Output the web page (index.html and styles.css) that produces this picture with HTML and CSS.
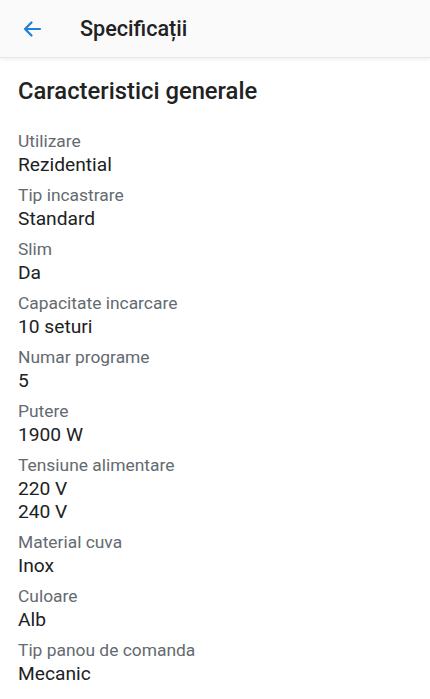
FILE: index.html
```html
<!DOCTYPE html>
<html lang="ro">
<head>
  <meta charset="UTF-8">
  <meta name="viewport" content="width=device-width, initial-scale=1.0">
  <title>Specificații</title>
  <link rel="stylesheet" href="styles.css">
</head>
<body>

  <header class="topbar">
    <button class="back" aria-label="Inapoi">
      <svg width="24" height="24" viewBox="0 0 24 24"><path d="M20 12H5M11.5 5.5L5 12l6.5 6.5" fill="none" stroke="#1e7fd8" stroke-width="2.2" stroke-linecap="round" stroke-linejoin="round"/></svg>
    </button>
    <h1>Specificații</h1>
  </header>

  <main class="specs">
    <h2>Caracteristici generale</h2>

    <dl>
      <div class="item"><dt>Utilizare</dt><dd>Rezidential</dd></div>
      <div class="item"><dt>Tip incastrare</dt><dd>Standard</dd></div>
      <div class="item"><dt>Slim</dt><dd>Da</dd></div>
      <div class="item"><dt>Capacitate incarcare</dt><dd>10 seturi</dd></div>
      <div class="item"><dt>Numar programe</dt><dd>5</dd></div>
      <div class="item"><dt>Putere</dt><dd>1900 W</dd></div>
      <div class="item"><dt>Tensiune alimentare</dt><dd>220 V</dd><dd>240 V</dd></div>
      <div class="item"><dt>Material cuva</dt><dd>Inox</dd></div>
      <div class="item"><dt>Culoare</dt><dd>Alb</dd></div>
      <div class="item"><dt>Tip panou de comanda</dt><dd>Mecanic</dd></div>
    </dl>
  </main>

</body>
</html>
```

FILE: styles.css
```css
body { margin: 0; font-family: Roboto, "Noto Sans", sans-serif; background: #fff; color: #202124; }
.topbar { display: flex; align-items: center; height: 57px; background: #fafafa; border-bottom: 1px solid #e6e6e6; box-shadow: 0 2px 4px rgba(0,0,0,0.06); }
.back { display: flex; align-items: center; justify-content: center; width: 40px; height: 40px; margin-left: 12px; padding: 0; border: 0; background: none; }
.topbar h1 { margin: 0 0 0 28px; font-size: 21.6px; font-weight: 500; color: #222; }
.specs { padding: 18px 18px 0; }
.specs h2 { margin: 0 0 23px; font-size: 23.8px; font-weight: 500; line-height: 30px; color: #222; }
dl { margin: 0; }
.item { padding-bottom: 7px; }
dt { font-size: 17.4px; line-height: 24px; color: #646a70; }
dd { margin: 0; font-size: 19.2px; line-height: 23px; color: #202124; }
```
